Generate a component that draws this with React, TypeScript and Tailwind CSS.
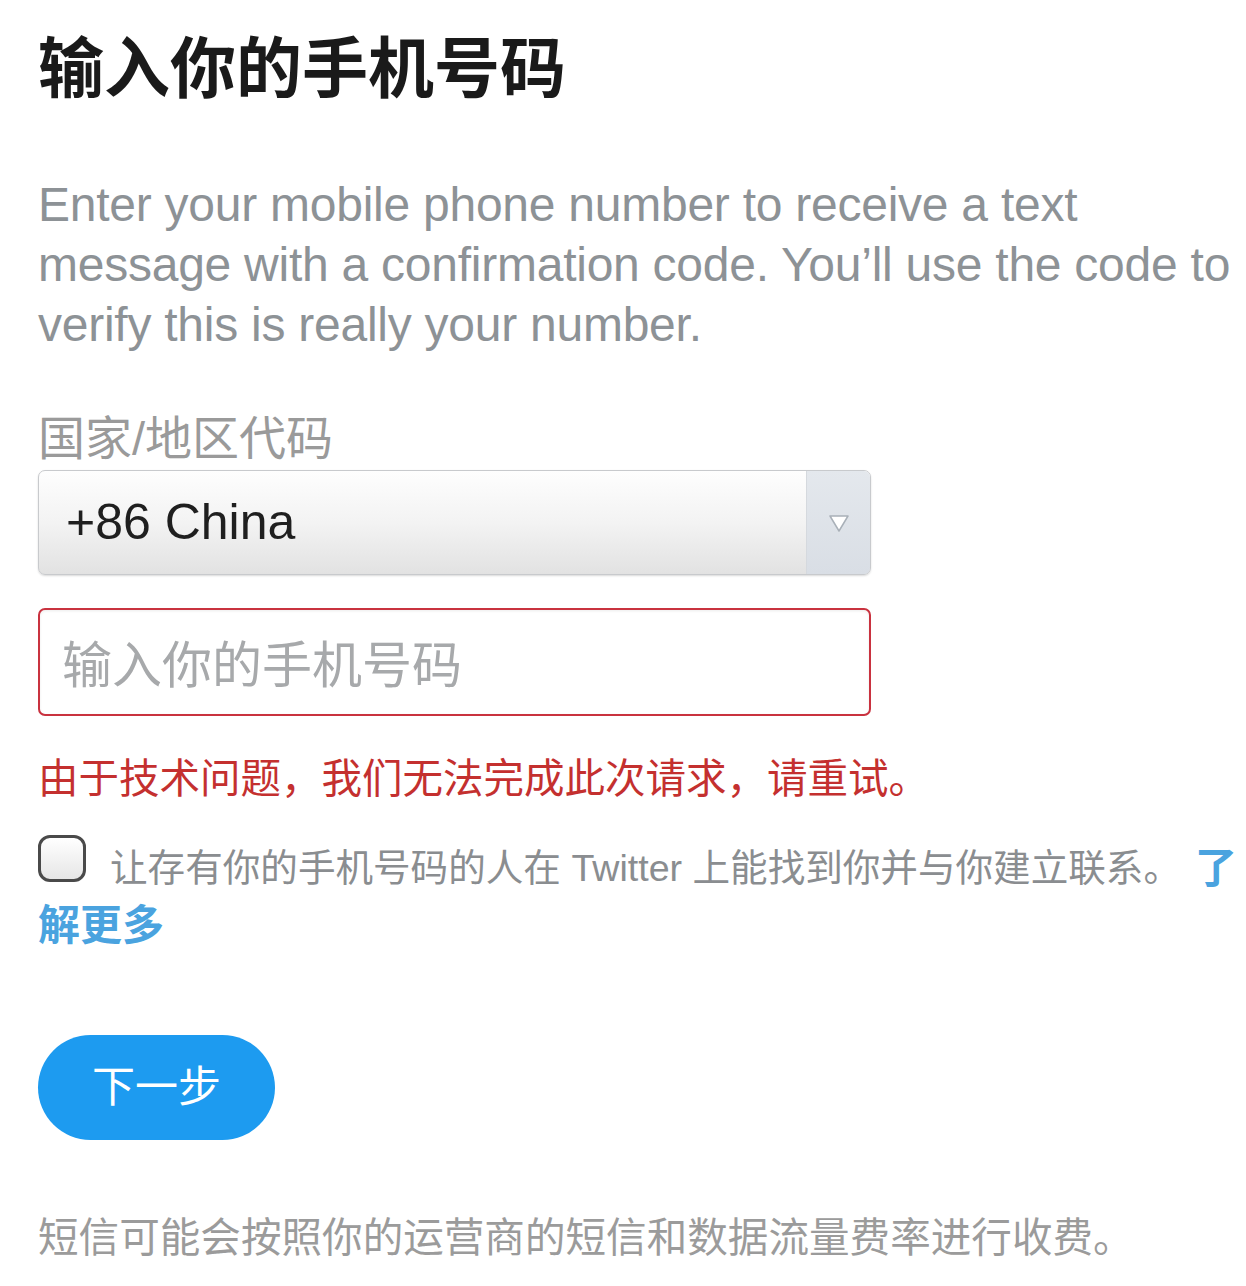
import React from "react";

const FONT = '"Liberation Sans", "Noto Sans CJK SC", sans-serif';

export default function App() {
  return (
    <div
      className="w-[1246px] h-[1286px] bg-white pl-[38px] pr-[8px] overflow-hidden"
      style={{ fontFamily: FONT }}
    >
      <h1 className="pt-[29px] text-[66px] leading-[80px] font-bold text-[#1a1a1a]">
        输入你的手机号码
      </h1>

      <p className="mt-[66px] text-[48px] leading-[60px] text-[#8d9296] tracking-[-0.25px] whitespace-nowrap">
        Enter your mobile phone number to receive a text
        <br />
        message with a confirmation code. You’ll use the code to
        <br />
        verify this is really your number.
      </p>

      <div className="mt-[55px] text-[47px] leading-[58px] text-[#9a9a9a]">国家/地区代码</div>

      <div className="mt-[2px] w-[833px] h-[105px] flex rounded-[7px] border border-[#c8cacd] bg-gradient-to-b from-[#fefefe] via-[#f3f3f3] to-[#e2e2e2] shadow-[0_1px_2px_rgba(0,0,0,0.15)] overflow-hidden">
        <div className="flex-1 flex items-center pl-[27px] text-[50px] text-[#1f1f1f]">
          +86 China
        </div>
        <div className="w-[64px] flex items-center justify-center border-l border-[#d5d9de] bg-gradient-to-b from-[#e4e8ed] to-[#d9dee5]">
          <svg width="22" height="22" viewBox="0 0 22 22">
            <polygon
              points="2,4 20,4 11,19"
              fill="#ffffff"
              stroke="#a9b0b8"
              strokeWidth="1.5"
              strokeLinejoin="round"
            />
          </svg>
        </div>
      </div>

      <div className="mt-[33px] w-[833px] h-[108px] flex items-center rounded-[7px] border-2 border-[#c9323f] bg-white shadow-[inset_0_1px_3px_rgba(0,0,0,0.08)] pl-[22px] pt-[8px]">
        <span className="text-[50px] text-[#a7a9ab]">输入你的手机号码</span>
      </div>

      <div className="mt-[35px] text-[40.5px] leading-[56px] text-[#c4302f]">
        由于技术问题，我们无法完成此次请求，请重试。
      </div>

      <div className="mt-[33px] h-[57px] flex items-center whitespace-nowrap">
        <span className="self-start -mt-[5px] w-[48px] h-[47px] rounded-[12px] border-[3px] border-[#4a4a4a] bg-gradient-to-b from-[#ffffff] to-[#e6e6e6] mr-[24px] shrink-0"></span>
        <span className="text-[37.6px] leading-none text-[#8a8d90]">
          让存有你的手机号码的人在 Twitter 上能找到你并与你建立联系。
        </span>
        <span className="text-[42px] leading-none font-bold text-[#4aa3df] ml-[14px]">了</span>
      </div>
      <div className="text-[42px] leading-[57px] font-bold text-[#4aa3df]">解更多</div>

      <button className="mt-[81px] w-[237px] h-[105px] rounded-full bg-[#1d9bf0] text-white text-[43px] flex items-center justify-center">
        下一步
      </button>

      <div className="mt-[70px] text-[40.6px] leading-[56px] text-[#9b9b9b]">
        短信可能会按照你的运营商的短信和数据流量费率进行收费。
      </div>
    </div>
  );
}
